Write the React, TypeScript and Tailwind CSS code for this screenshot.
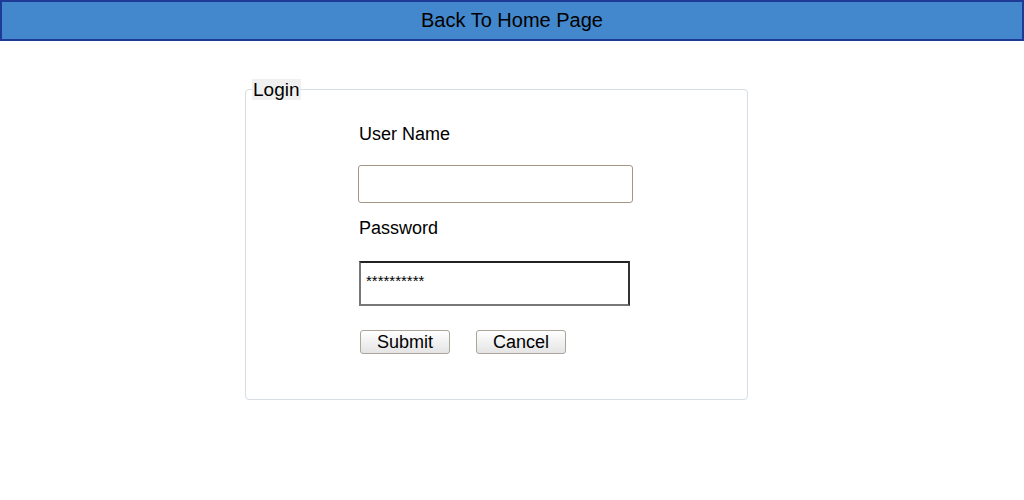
export default function App() {
  return (
    <div className="min-h-[500px] w-[1024px] bg-white font-['Liberation_Sans',Arial,sans-serif] text-black">
      <div className="flex h-[41px] items-center justify-center border-2 border-[#1f3a94] bg-[#4388cc] pb-[1px] text-[20px]">
        Back To Home Page
      </div>

      <fieldset className="mt-[38px] ml-[245px] w-[503px] rounded-[4px] border border-[#d6dde4] px-[6px]">
        <legend className="bg-[#f0f0f0] px-[1px] text-[19px] leading-[21px]">Login</legend>

        <div className="ml-[107px] flex flex-col items-start pt-[23px] pb-[45px]">
          <label className="text-[18px] leading-[22px]">User Name</label>
          <input
            type="text"
            className="mt-[20px] -ml-[1px] h-[38px] w-[275px] rounded-[3px] border border-[#a39683] bg-white px-1 outline-none"
          />
          <label className="mt-[14px] text-[18px] leading-[22px]">Password</label>
          <input
            type="text"
            readOnly
            value="**********"
            className="mt-[22px] h-[45px] w-[271px] border-2 border-t-[#222] border-l-[#777] border-r-[#333] border-b-[#777] bg-white pb-[6px] pl-[5px] text-[15px] outline-none"
          />
          <div className="mt-[24px] ml-[1px] flex gap-[26px]">
            <button className="h-[24px] w-[90px] rounded-[3px] border border-[#aca59c] bg-gradient-to-b from-white to-[#e4e4e4] text-[18px] leading-[20px]">
              Submit
            </button>
            <button className="h-[24px] w-[90px] rounded-[3px] border border-[#aca59c] bg-gradient-to-b from-white to-[#e4e4e4] text-[18px] leading-[20px]">
              Cancel
            </button>
          </div>
        </div>
      </fieldset>
    </div>
  );
}
